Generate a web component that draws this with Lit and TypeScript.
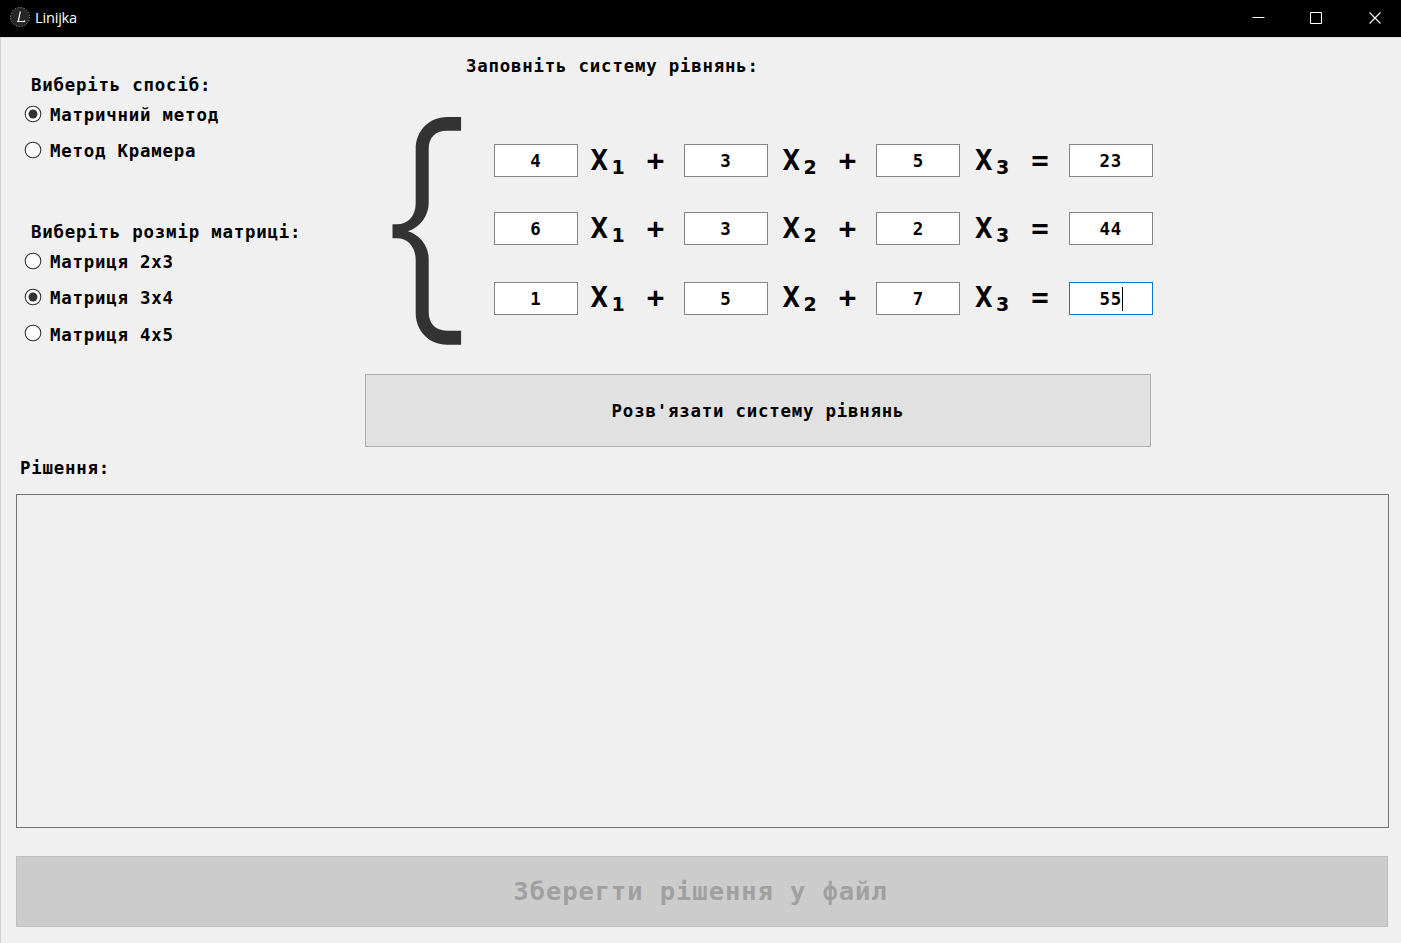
import { LitElement, html, css } from "lit";
import { customElement, state } from "lit/decorators.js";

@customElement("app-root")
export class AppRoot extends LitElement {
  @state() method = 0;
  @state() size = 1;

  private methods = ["Матричний метод", "Метод Крамера"];
  private sizes = ["Матриця 2x3", "Матриця 3x4", "Матриця 4x5"];
  private rows = [
    ["4", "3", "5", "23"],
    ["6", "3", "2", "44"],
    ["1", "5", "7", "55"],
  ];

  static styles = css`
    :host {
      display: flex;
      flex-direction: column;
      height: 943px;
      background: #f0f0f0;
      color: #000;
      font: bold 17.4px/20px "DejaVu Sans Mono", monospace;
      letter-spacing: 0.79px;
      overflow: hidden;
    }
    * { box-sizing: border-box; }
    .titlebar {
      display: flex;
      align-items: center;
      flex: none;
      height: 37px;
      padding-left: 10px;
      background: #000;
      color: #fff;
    }
    .logo { display: block; width: 20px; height: 20px; margin-bottom: 3px; }
    .title {
      flex: 1;
      margin: 0 0 4px 5px;
      font: 400 14.6px/20px "Open Sans", "Noto Sans", sans-serif;
      letter-spacing: -0.2px;
    }
    .winbtn { display: block; width: 58.5px; height: 37px; flex: none; }
    .client {
      flex: 1;
      display: flex;
      flex-direction: column;
      border-left: 1px solid #d4d4d4;
      border-top: 1px solid #dcdcdc;
      padding: 0 12px 0 15px;
    }
    .top { display: flex; height: 409px; }
    .options { width: 349px; padding-top: 37px; }
    .heading { margin-left: 15px; height: 20px; white-space: pre; }
    .radio {
      display: flex;
      align-items: center;
      gap: 8px;
      height: 36.3px;
      margin-left: 8px;
      cursor: pointer;
    }
    .heading + .radio { margin-top: 1px; }
    .radio svg { display: block; width: 18px; height: 18px; margin-bottom: 1px; }
    .radio span { white-space: pre; margin-top: 2px; }
    .second { margin-top: 53.4px; }
    .work { width: 800px; padding-top: 18px; }
    .fill { margin-left: 101px; height: 20px; }
    .system { display: flex; height: 229px; margin: 41px 0 0 27px; }
    .brace { width: 70px; height: 229px; flex: none; overflow: visible; }
    .equations { margin: 27px 0 0 32px; }
    .equation { display: flex; height: 33px; margin-bottom: 35px; }
    .equation:nth-child(2) { margin-bottom: 37px; }
    .cell {
      width: 84px;
      height: 33px;
      display: flex;
      align-items: center;
      justify-content: center;
      background: #fff;
      border: 1px solid #858585;
      flex: none;
    }
    .cell.focus { border-color: #0078d7; }
    .caret { width: 1px; height: 24px; margin-left: 0; margin-right: -1px; background: #000; }
    .term {
      display: flex;
      width: 108.4px;
      padding-left: 14.5px;
      font-size: 29px;
      line-height: 33px;
      letter-spacing: 0;
      flex: none;
    }
    .var { width: 21px; }
    .idx {
      width: 35.3px;
      height: 33px;
      font-family: "DejaVu Sans", sans-serif;
      font-size: 19px;
      line-height: 47px;
    }
    .op { width: 20px; line-height: 33px; }
    .equation .term:nth-child(2) { width: 106px; padding-left: 12.5px; }
    .equation:nth-child(3) .term { margin-top: -1px; }
    .solve {
      display: flex;
      align-items: center;
      justify-content: center;
      width: 786px;
      height: 73px;
      margin-top: 28px;
      padding-top: 1px;
      background: #e1e1e1;
      border: 1px solid #adadad;
    }
    .result-label { margin: 11px 0 0 4px; height: 20px; }
    .result { height: 334px; margin-top: 16px; border: 1px solid #737373; }
    .save {
      display: flex;
      align-items: center;
      justify-content: center;
      width: 1372px;
      height: 71px;
      margin-top: 28px;
      padding: 0 3px 2px 0;
      background: #ccc;
      border: 1px solid #bfbfbf;
      color: #a0a0a0;
      font-size: 25.5px;
      letter-spacing: 0.92px;
    }
  `;

  private radio(label: string, on: boolean, pick: () => void) {
    return html`<div class="radio" role="radio" aria-checked=${on} @click=${pick}>
      <svg viewBox="0 0 18 18">
        <circle cx="9" cy="9" r="7.8" fill="#fff" stroke="#333" stroke-width="1.1" />
        <circle cx="9" cy="9" r=${on ? 4.5 : 0} fill="#333" />
      </svg>
      <span>${label}</span>
    </div>`;
  }

  private equation(values: string[], last: boolean) {
    return html`<div class="equation">
      ${values.map(
        (v, i) => html`<div class="cell ${last && i === 3 ? "focus" : ""}">
            ${v}${last && i === 3 ? html`<i class="caret"></i>` : ""}
          </div>
          ${i < 3
            ? html`<div class="term">
                <span class="var">X</span><span class="idx">${i + 1}</span><span class="op">${i < 2 ? "+" : "="}</span>
              </div>`
            : ""}`
      )}
    </div>`;
  }

  render() {
    return html`
      <div class="titlebar">
        <svg class="logo" viewBox="0 0 20 20">
          <circle cx="10" cy="10" r="9.5" fill="#262626" stroke="#aaa" stroke-width="0.9" stroke-dasharray="1.2 1.8" />
          <path d="M10.300 4.500 8.300 14.300M7 14.500h7.500v-1" fill="none" stroke="#fff" stroke-width="1.2" />
        </svg>
        <div class="title">Linijka</div>
        <svg class="winbtn" viewBox="0 0 58.5 37"><path d="M26.500 17.500h12" stroke="#fff" /></svg>
        <svg class="winbtn" viewBox="0 0 58.5 37"><path d="M26.500 12.500h11v11h-11z" fill="none" stroke="#fff" /></svg>
        <svg class="winbtn" viewBox="0 0 58.5 37"><path d="m26.500 12.500 11 11m0-11-11 11" stroke="#fff" stroke-width="1.1" /></svg>
      </div>
      <div class="client">
        <div class="top">
          <div class="options">
            <div class="heading">Виберіть спосіб:</div>
            ${this.methods.map((m, i) => this.radio(m, i === this.method, () => (this.method = i)))}
            <div class="heading second">Виберіть розмір матриці:</div>
            ${this.sizes.map((m, i) => this.radio(m, i === this.size, () => (this.size = i)))}
          </div>
          <div class="work">
            <div class="fill">Заповніть систему рівнянь:</div>
            <div class="system">
              <svg class="brace" viewBox="0 0 70 229">
                <path
                  d="M69.100 0H55C37 0 23.700 14 23.700 32V86C23.700 99 16 107.300 5 107.300H0.500V121.200H5C16 121.200 23.700 130 23.700 143V196C23.700 214 37 227.700 55 227.700H69.100V213.700H55C43 213.700 36.700 206 36.700 195V142C36.700 129 28 118 16 114.300C28 110 36.700 99 36.700 86V32C36.700 21 43 13.800 55 13.800H69.100Z"
                  fill="#333" />
              </svg>
              <div class="equations">${this.rows.map((r, i) => this.equation(r, i === 2))}</div>
            </div>
            <div class="solve">Розв'язати систему рівнянь</div>
          </div>
        </div>
        <div class="result-label">Рішення:</div>
        <div class="result"></div>
        <div class="save">Зберегти рішення у файл</div>
      </div>
    `;
  }
}
